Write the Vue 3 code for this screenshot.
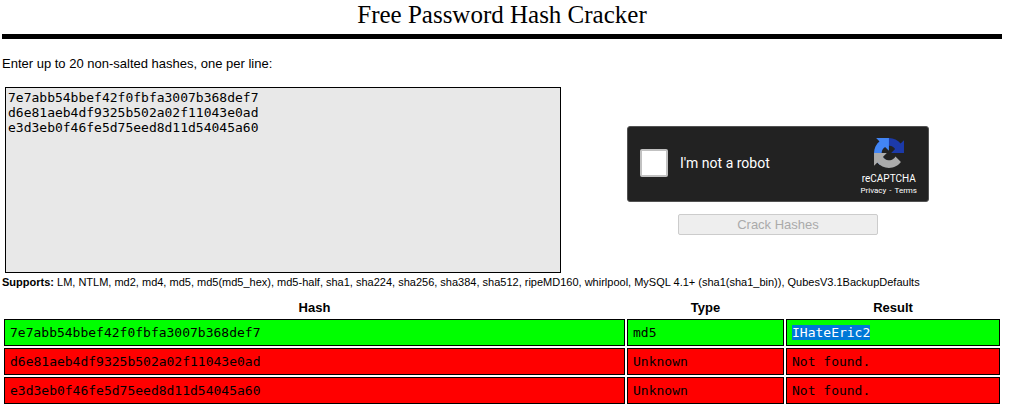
<script setup>
import { ref } from 'vue'

const hashes = ref(
  [
    '7e7abb54bbef42f0fbfa3007b368def7',
    'd6e81aeb4df9325b502a02f11043e0ad',
    'e3d3eb0f46fe5d75eed8d11d54045a60'
  ].join('\n')
)

const results = [
  { hash: '7e7abb54bbef42f0fbfa3007b368def7', type: 'md5', result: 'IHateEric2', found: true },
  { hash: 'd6e81aeb4df9325b502a02f11043e0ad', type: 'Unknown', result: 'Not found.', found: false },
  { hash: 'e3d3eb0f46fe5d75eed8d11d54045a60', type: 'Unknown', result: 'Not found.', found: false }
]
</script>

<template>
  <main class="page">
    <h1 class="title">Free Password Hash Cracker</h1>
    <form class="cracker" @submit.prevent>
      <label class="prompt" for="hashes">Enter up to 20 non-salted hashes, one per line:</label>
      <div class="entry">
        <textarea id="hashes" v-model="hashes" class="hashes" spellcheck="false"></textarea>
        <div class="verify">
          <div class="captcha">
            <input id="robot" class="tick" type="checkbox" />
            <label class="robot" for="robot">I'm not a robot</label>
            <div class="brand">
              <svg class="logo" viewBox="0 0 64 64" aria-hidden="true">
                <path fill="#1c3aa9" d="M64 31.955l-.033-1.37V4.687l-7.16 7.16C50.948 4.674 42.033.093 32.05.093c-10.4 0-19.622 4.96-25.458 12.64l11.736 11.86a15.55 15.55 0 0 1 4.754-5.334c2.05-1.6 4.952-2.906 8.968-2.906.485 0 .86.057 1.135.163 4.976.393 9.288 3.14 11.828 7.124l-8.307 8.307L64 31.953" />
                <path fill="#4285f4" d="M31.862.094l-1.37.033H4.594l7.16 7.16C4.58 13.147 0 22.06 0 32.046c0 10.4 4.96 19.622 12.64 25.458L24.5 45.768a15.55 15.55 0 0 1-5.334-4.754c-1.6-2.05-2.906-4.952-2.906-8.968 0-.485.057-.86.163-1.135.393-4.976 3.14-9.288 7.124-11.828l8.307 8.307L31.86.095" />
                <path fill="#ababab" d="M.001 32.045l.033 1.37v25.898l7.16-7.16c5.86 7.173 14.774 11.754 24.76 11.754 10.4 0 19.622-4.96 25.458-12.64l-11.736-11.86a15.55 15.55 0 0 1-4.754 5.334c-2.05 1.6-4.952 2.906-8.968 2.906-.485 0-.86-.057-1.135-.163-4.976-.393-9.288-3.14-11.828-7.124l8.307-8.307c-10.522.04-22.4.066-27.295-.005" />
              </svg>
              <span class="name">reCAPTCHA</span>
              <span class="legal"><a href="#privacy">Privacy</a><span class="dash"> - </span><a href="#terms">Terms</a></span>
            </div>
          </div>
          <button class="crack" type="submit" disabled>Crack Hashes</button>
        </div>
      </div>
    </form>
    <p class="supports">
      <strong>Supports:</strong> LM, NTLM, md2, md4, md5, md5(md5_hex), md5-half, sha1, sha224, sha256, sha384, sha512, ripeMD160, whirlpool, MySQL 4.1+ (sha1(sha1_bin)), QubesV3.1BackupDefaults
    </p>
    <table class="results">
      <thead>
        <tr>
          <th scope="col">Hash</th>
          <th class="col-type" scope="col">Type</th>
          <th class="col-result" scope="col">Result</th>
        </tr>
      </thead>
      <tbody>
        <tr v-for="row in results" :key="row.hash" :class="row.found ? 'found' : 'missing'">
          <td>{{ row.hash }}</td>
          <td>{{ row.type }}</td>
          <td><mark v-if="row.found" class="selected">{{ row.result }}</mark><template v-else>{{ row.result }}</template></td>
        </tr>
      </tbody>
    </table>
  </main>
</template>

<style>
body {
  background: #fff;
}
</style>

<style scoped>
.page {
  margin: 0 21px 0 2px;
  color: #000;
  font: 13px/16px "Liberation Sans", Arial, sans-serif;
}
.title {
  margin: 0;
  padding-bottom: 4px;
  border-bottom: 5px solid #000;
  font: 25px/30px "Liberation Serif", "Times New Roman", serif;
  text-align: center;
}
.prompt {
  display: block;
  margin: 17px 0 15px;
}
.entry {
  display: grid;
  grid-template-columns: 556fr 434fr;
  align-items: center;
  margin: 0 7px 0 3px;
}
.hashes {
  box-sizing: border-box;
  display: block;
  width: 100%;
  height: 186px;
  padding: 2px;
  border: 1px solid #000;
  border-radius: 0;
  outline: none;
  resize: none;
  background: #e8e8e8;
  color: #000;
  font: 13px/15px "DejaVu Sans Mono", monospace;
}
.verify {
  display: flex;
  flex-direction: column;
  align-items: center;
  gap: 12px;
}
.captcha {
  box-sizing: border-box;
  display: flex;
  align-items: center;
  width: 302px;
  height: 76px;
  padding: 0 11px 2px 12px;
  border: 1px solid #525252;
  border-radius: 3px;
  background: #222;
  color: #fff;
  font-family: Roboto, sans-serif;
}
.tick {
  appearance: none;
  box-sizing: border-box;
  width: 28px;
  height: 28px;
  margin: 0 12px 0 0;
  border: 2px solid #c1c1c1;
  border-radius: 2px;
  background: #fff;
}
.robot {
  flex: 1;
  font-size: 14px;
}
.brand {
  display: flex;
  flex-direction: column;
  align-items: center;
  align-self: flex-start;
  padding-top: 11px;
}
.logo {
  width: 30px;
  height: 30px;
  margin-bottom: 5px;
}
.name {
  font-size: 10px;
  line-height: 12px;
}
.legal {
  font-size: 8px;
  line-height: 12px;
}
.legal a {
  color: inherit;
  text-decoration: none;
}
.dash {
  margin: 0 1px;
}
.crack {
  box-sizing: border-box;
  width: 200px;
  height: 21px;
  padding: 0;
  border: 1px solid #ccc;
  border-radius: 2px;
  background: #eee;
  color: #aaa;
  font: 13px/19px "Liberation Sans", Arial, sans-serif;
}
.supports {
  margin: 1px 0 0;
  font-size: 11px;
}
.results {
  width: 100%;
  margin-top: 7px;
  border-collapse: separate;
  border-spacing: 2px;
  table-layout: fixed;
}
.results th {
  box-sizing: border-box;
  padding: 1px;
  font-weight: bold;
}
.results .col-type {
  width: 157px;
}
.results .col-result {
  width: 214px;
}
.results td {
  padding: 5px;
  border: 1px solid #000;
  font: 13px/15px "DejaVu Sans Mono", monospace;
}
.found td {
  background: #0f0;
}
.missing td {
  background: #f00;
}
.selected {
  background: #0078d7;
  color: #fff;
}
</style>
